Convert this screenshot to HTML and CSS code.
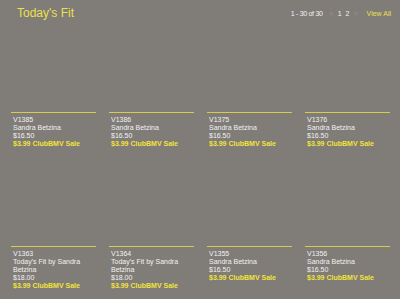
FILE: index.html
```html
<!DOCTYPE html>
<html lang="en">
<head>
    <meta charset="UTF-8">
    <title>Today's Fit</title>
    <link rel="stylesheet" href="styles.css">
</head>
<body>
    <div class="page">
        <div class="header">
            <h1>Today's Fit</h1>
            <div class="pager">
                <span class="count">1 - 30 of 30</span>
                <span class="arrow">&lt;</span>
                <span class="num">1</span>
                <span class="num">2</span>
                <span class="arrow">&gt;</span>
                <a class="view-all" href="#">View All</a>
            </div>
        </div>

        <div class="grid">
            <div class="card">
                <div class="thumb"></div>
                <div class="info">
                    <div>V1385</div>
                    <div>Sandra Betzina</div>
                    <div>$16.50</div>
                    <div class="sale">$3.99 ClubBMV Sale</div>
                </div>
            </div>
            <div class="card">
                <div class="thumb"></div>
                <div class="info">
                    <div>V1386</div>
                    <div>Sandra Betzina</div>
                    <div>$16.50</div>
                    <div class="sale">$3.99 ClubBMV Sale</div>
                </div>
            </div>
            <div class="card">
                <div class="thumb"></div>
                <div class="info">
                    <div>V1375</div>
                    <div>Sandra Betzina</div>
                    <div>$16.50</div>
                    <div class="sale">$3.99 ClubBMV Sale</div>
                </div>
            </div>
            <div class="card">
                <div class="thumb"></div>
                <div class="info">
                    <div>V1376</div>
                    <div>Sandra Betzina</div>
                    <div>$16.50</div>
                    <div class="sale">$3.99 ClubBMV Sale</div>
                </div>
            </div>

            <div class="card">
                <div class="thumb"></div>
                <div class="info">
                    <div>V1363</div>
                    <div>Today's Fit by Sandra Betzina</div>
                    <div>$18.00</div>
                    <div class="sale">$3.99 ClubBMV Sale</div>
                </div>
            </div>
            <div class="card">
                <div class="thumb"></div>
                <div class="info">
                    <div>V1364</div>
                    <div>Today's Fit by Sandra Betzina</div>
                    <div>$18.00</div>
                    <div class="sale">$3.99 ClubBMV Sale</div>
                </div>
            </div>
            <div class="card">
                <div class="thumb"></div>
                <div class="info">
                    <div>V1355</div>
                    <div>Sandra Betzina</div>
                    <div>$16.50</div>
                    <div class="sale">$3.99 ClubBMV Sale</div>
                </div>
            </div>
            <div class="card">
                <div class="thumb"></div>
                <div class="info">
                    <div>V1356</div>
                    <div>Sandra Betzina</div>
                    <div>$16.50</div>
                    <div class="sale">$3.99 ClubBMV Sale</div>
                </div>
            </div>
        </div>
    </div>
</body>
</html>
```

FILE: styles.css
```css
body {
    margin: 0;
    background: #807c77;
    font-family: "Liberation Sans", Arial, sans-serif;
    color: #f2f2f2;
}
.page {
    width: 400px;
    height: 299px;
    overflow: hidden;
}
.header {
    display: flex;
    justify-content: space-between;
    align-items: flex-start;
    padding: 7px 9px 0 17px;
    height: 23px;
}
.header h1 {
    margin: 0;
    font-size: 12px;
    font-weight: normal;
    line-height: 13px;
    color: #ece04c;
}
.pager {
    display: flex;
    align-items: center;
    font-size: 7px;
    line-height: 9px;
    padding-top: 2px;
}
.count {
    margin-right: 7px;
    letter-spacing: -0.3px;
}
.arrow {
    color: #9a9692;
    margin-right: 4px;
}
.num {
    margin-right: 4px;
}
.view-all {
    margin-left: 5px;
    color: #ece04c;
    text-decoration: none;
}
.grid {
    display: grid;
    grid-template-columns: repeat(4, 85px);
    column-gap: 13px;
    row-gap: 14px;
    padding-left: 11px;
}
.thumb {
    height: 82px;
}
.info {
    border-top: 1px solid #d9cc4a;
    padding: 3px 2px 0 2px;
    font-size: 7px;
    line-height: 8px;
    min-height: 34px;
}
.sale {
    color: #f2e43a;
    font-weight: bold;
}
```
